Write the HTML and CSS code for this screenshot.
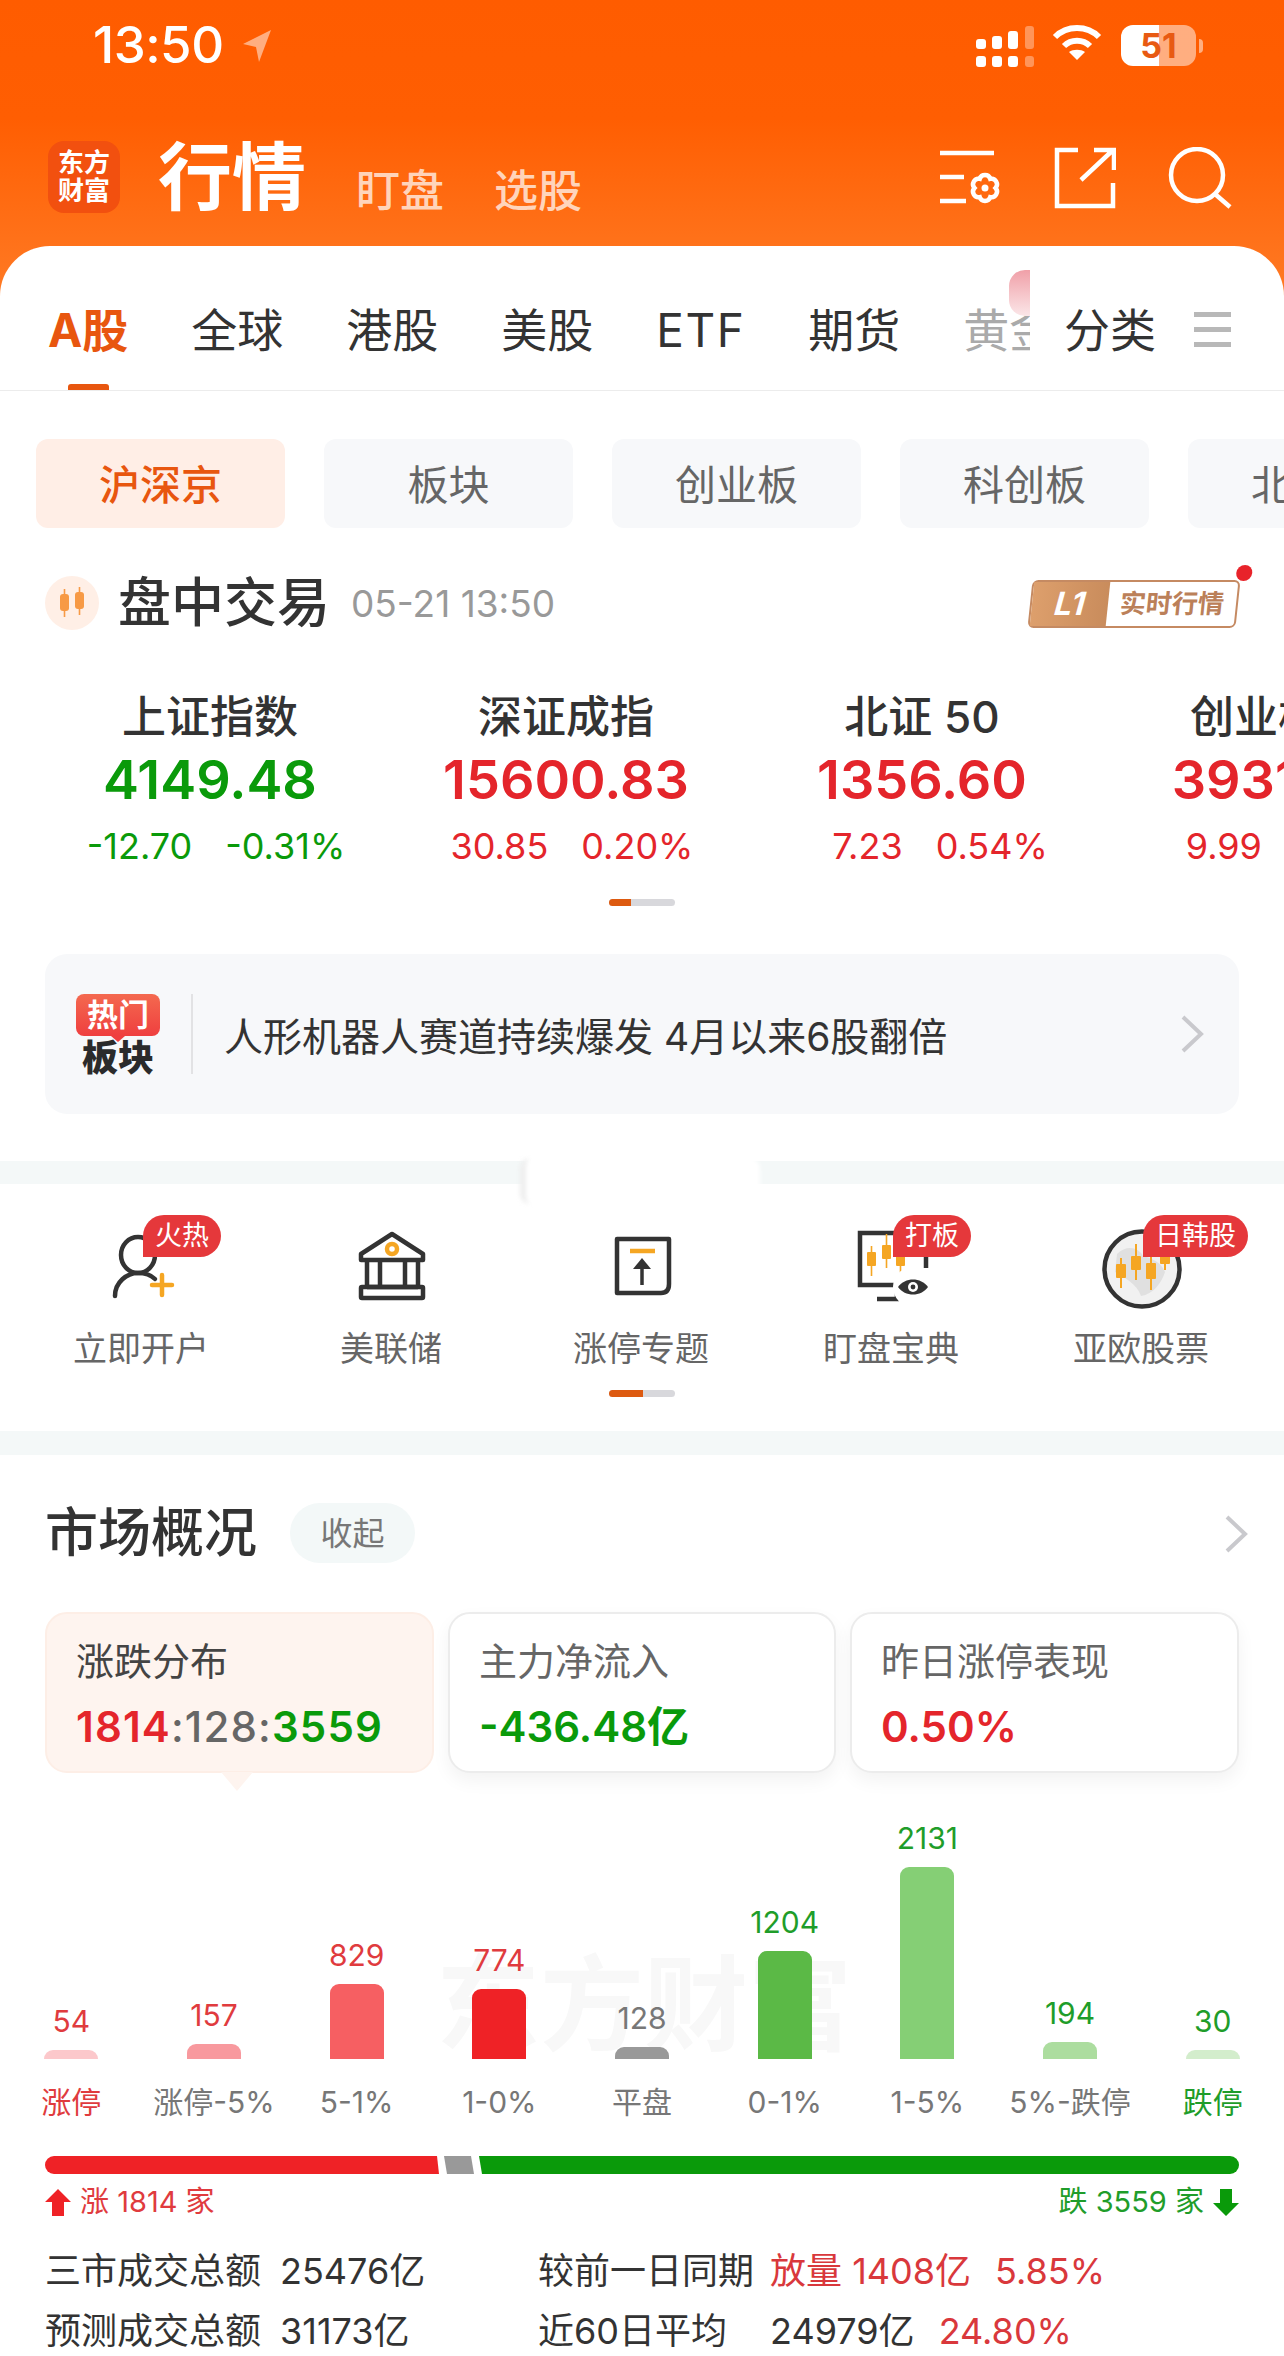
FILE: index.html
```html
<!DOCTYPE html>
<html lang="zh-CN">
<head>
    <meta charset="UTF-8">
    <meta name="viewport" content="width=device-width, initial-scale=1.0">
    <title>行情</title>
    <link rel="stylesheet" href="styles.css">
</head>
<body>
    <header class="top">
        <div class="status">
            <div class="status-left">
                <span class="time">13:50</span>
                <svg class="loc" width="30" height="34" viewBox="0 0 30 34"><path d="M29 1 L1 15 L14 18 L17 33 Z" fill="#fff" fill-opacity=".5"/></svg>
            </div>
            <div class="status-right">
                <svg width="60" height="44" viewBox="0 0 60 44" fill="#fff">
                    <rect x="0" y="15" width="10" height="10" rx="3"/><rect x="0" y="32" width="10" height="11" rx="3"/>
                    <rect x="16" y="12" width="10" height="13" rx="3"/><rect x="16" y="32" width="10" height="11" rx="3"/>
                    <rect x="32" y="7" width="10" height="18" rx="3"/><rect x="32" y="32" width="10" height="11" rx="3"/>
                    <rect x="49" y="2" width="9" height="23" rx="3" fill-opacity=".35"/><rect x="49" y="32" width="9" height="11" rx="3" fill-opacity=".35"/>
                </svg>
                <svg width="50" height="37" viewBox="0 0 50 37" fill="none" stroke="#fff" stroke-width="6">
                    <path d="M3 13 C15 1 35 1 47 13"/>
                    <path d="M12 22 C19 15 31 15 38 22"/>
                    <path d="M25 36 L17 28 C21 25 29 25 33 28 Z" fill="#fff" stroke="none"/>
                </svg>
                <div class="battery"><span class="battery-num">51</span></div>
                <span class="battery-nub"></span>
            </div>
        </div>
        <div class="head-row">
            <div class="logo"><span>东方</span><span>财富</span></div>
            <h1 class="page-title">行情</h1>
            <a class="head-link">盯盘</a>
            <a class="head-link">选股</a>
            <div class="head-icons">
                <svg class="icon-set" width="66" height="56" viewBox="0 0 66 56" fill="none" stroke="#fff" stroke-width="4.5">
                    <path d="M0 3 H54 M0 27 H24 M0 51 H26"/>
                    <path d="M55.5 38 A5.5 5.5 0 0 1 50.25 47.1 A5.5 5.5 0 0 1 39.75 47.1 A5.5 5.5 0 0 1 34.5 38 A5.5 5.5 0 0 1 39.75 28.9 A5.5 5.5 0 0 1 50.25 28.9 A5.5 5.5 0 0 1 55.5 38 Z"/>
                    <circle cx="45" cy="38" r="3.5" fill="#fff" stroke="none"/>
                </svg>
                <svg class="icon-share" width="62" height="62" viewBox="0 0 62 62" fill="none" stroke="#fff" stroke-width="4.5">
                    <path d="M24 3 H3 V59 H59 V36"/>
                    <path d="M27 33 L58 4 M40 3 H60 V23"/>
                </svg>
                <svg class="icon-search" width="64" height="62" viewBox="0 0 64 62" fill="none" stroke="#fff" stroke-width="4.5">
                    <circle cx="29" cy="28" r="26"/>
                    <path d="M47 47 L62 60"/>
                </svg>
            </div>
        </div>
    </header>

    <main class="panel">
        <nav class="tabs">
            <div class="tabs-scroll">
                <a class="tab tab-on">A股</a>
                <a class="tab">全球</a>
                <a class="tab">港股</a>
                <a class="tab">美股</a>
                <a class="tab tab-latin">ETF</a>
                <a class="tab">期货</a>
                <a class="tab tab-fade">黄金<span class="tab-dot"></span></a>
            </div>
            <a class="tab tab-more">分类</a>
            <span class="tab-menu"><i></i><i></i><i></i></span>
        </nav>

        <div class="chips">
            <a class="chip chip-on">沪深京</a>
            <a class="chip">板块</a>
            <a class="chip">创业板</a>
            <a class="chip">科创板</a>
            <a class="chip">北交所</a>
        </div>

        <section class="trade-head">
            <span class="candle-ico">
                <svg width="30" height="34" viewBox="0 0 30 34" fill="#f79a45">
                    <rect x="3" y="8" width="9" height="17" rx="3"/><rect x="6.7" y="3" width="1.6" height="28"/>
                    <rect x="18" y="6" width="9" height="17" rx="3"/><rect x="21.7" y="1" width="1.6" height="28"/>
                </svg>
            </span>
            <h2 class="trade-title">盘中交易</h2>
            <span class="trade-date">05-21 13:50</span>
            <div class="l1">
                <span class="l1-left"><b>L1</b></span>
                <span class="l1-right"><b>实时行情</b></span>
                <i class="l1-dot"></i>
            </div>
        </section>

        <div class="indices">
            <div class="index">
                <div class="index-name">上证指数</div>
                <div class="index-val down">4149.48</div>
                <div class="index-sub down"><span>-12.70</span><span>-0.31%</span></div>
            </div>
            <div class="index">
                <div class="index-name">深证成指</div>
                <div class="index-val up">15600.83</div>
                <div class="index-sub up"><span>30.85</span><span>0.20%</span></div>
            </div>
            <div class="index">
                <div class="index-name">北证 50</div>
                <div class="index-val up">1356.60</div>
                <div class="index-sub index-sub-shift up"><span>7.23</span><span>0.54%</span></div>
            </div>
            <div class="index">
                <div class="index-name">创业板指</div>
                <div class="index-val up">3931.20</div>
                <div class="index-sub index-sub-shift up"><span>9.99</span><span>0.25%</span></div>
            </div>
        </div>
        <div class="pager pager-a"><i></i></div>

        <a class="banner">
            <div class="hot">
                <span class="hot-top">热门</span>
                <span class="hot-bottom">板块</span>
            </div>
            <span class="banner-text">人形机器人赛道持续爆发 4月以来6股翻倍</span>
            <svg class="chev" width="24" height="38" viewBox="0 0 24 38" fill="none" stroke="#c9c9cd" stroke-width="4"><path d="M3 2 L21 19 L3 36"/></svg>
        </a>

        <div class="gap-bar"></div>
        <div class="smudge"></div>

        <section class="shortcuts">
            <div class="shortcut-row">
                <a class="shortcut">
                    <span class="sc-icon">
                        <svg width="100" height="80" viewBox="0 0 100 80" fill="none" stroke="#333" stroke-width="4.5" stroke-linecap="round">
                            <ellipse cx="47" cy="27" rx="17" ry="18"/>
                            <path d="M24 68 C24 54 36 45 47 45 C54 45 60 47 64 51"/>
                            <path d="M71 47 V67 M61 57 H81" stroke="#f5a623"/>
                        </svg>
                        <em class="badge">火热</em>
                    </span>
                    <span class="sc-label">立即开户</span>
                </a>
                <a class="shortcut">
                    <span class="sc-icon">
                        <svg width="100" height="80" viewBox="0 0 100 80" fill="none" stroke="#333" stroke-width="4.5" stroke-linejoin="round">
                            <path d="M51 6 L82 26 V32 H20 V26 Z"/>
                            <path d="M26 32 V59 M39 32 V59 M64 32 V59 M77 32 V59 M26 59 H77"/>
                            <rect x="20" y="59" width="62" height="11" rx="1"/>
                            <circle cx="51" cy="21" r="5" stroke="#f5a623"/>
                        </svg>
                    </span>
                    <span class="sc-label">美联储</span>
                </a>
                <a class="shortcut">
                    <span class="sc-icon">
                        <svg width="100" height="80" viewBox="0 0 100 80" fill="none" stroke="#333" stroke-width="4.5">
                            <path d="M26 11 H78 V56 C78 62 75 65 70 65 H26 Z" stroke-linejoin="round"/>
                            <path d="M39 23 H64" stroke="#f5a623"/>
                            <path d="M51 34 V57" stroke-width="3.5"/>
                            <path d="M51 30 L60 41 H42 Z" fill="#333" stroke="none"/>
                        </svg>
                    </span>
                    <span class="sc-label">涨停专题</span>
                </a>
                <a class="shortcut">
                    <span class="sc-icon">
                        <svg width="100" height="80" viewBox="0 0 100 80" fill="none">
                            <path d="M85 40 V5 H19 V57 H85" stroke="#333" stroke-width="4.5"/>
                            <path d="M36 71 H56 V60" stroke="#333" stroke-width="4.5"/>
                            <g fill="#f5a623">
                                <rect x="26" y="24" width="9" height="14" rx="1"/><rect x="29.7" y="18" width="1.6" height="30"/>
                                <rect x="41" y="17" width="9" height="14" rx="1"/><rect x="44.7" y="6" width="1.6" height="34"/>
                                <rect x="55" y="24" width="9" height="14" rx="1"/><rect x="58.7" y="16" width="1.6" height="32"/>
                            </g>
                            <circle cx="72" cy="59" r="20" fill="#fff"/>
                            <path d="M57 59 C64 49 80 49 87 59 C80 69 64 69 57 59 Z" fill="#333"/>
                            <circle cx="72" cy="59" r="5" fill="#fff"/>
                            <circle cx="72" cy="59" r="2.4" fill="#333"/>
                        </svg>
                        <em class="badge">打板</em>
                    </span>
                    <span class="sc-label">盯盘宝典</span>
                </a>
                <a class="shortcut">
                    <span class="sc-icon">
                        <svg width="100" height="84" viewBox="0 0 100 84" fill="none">
                            <circle cx="51" cy="41" r="37.5" fill="#f1f1f1" stroke="#333" stroke-width="4.5"/>
                            <path d="M26 26 C36 16 48 20 52 28 C60 30 70 34 74 44 C70 56 62 66 50 68 C46 56 34 50 24 44 Z" fill="#e0e0e0"/>
                            <g fill="#f5a623">
                                <rect x="25" y="36" width="10" height="14" rx="1"/><rect x="29" y="30" width="2" height="30"/>
                                <rect x="40" y="28" width="10" height="14" rx="1"/><rect x="44" y="16" width="2" height="36"/>
                                <rect x="55" y="35" width="10" height="16" rx="1"/><rect x="59" y="26" width="2" height="36"/>
                                <rect x="69" y="22" width="10" height="14" rx="1"/><rect x="73" y="12" width="2" height="30"/>
                            </g>
                        </svg>
                        <em class="badge">日韩股</em>
                    </span>
                    <span class="sc-label">亚欧股票</span>
                </a>
            </div>
            <div class="pager pager-b"><i></i></div>
        </section>

        <div class="gap-bar gap-bar-2"></div>

        <section class="market">
            <div class="market-head">
                <h2 class="market-title">市场概况</h2>
                <a class="collapse">收起</a>
                <svg class="chev-2" width="24" height="38" viewBox="0 0 24 38" fill="none" stroke="#c9c9cd" stroke-width="4"><path d="M3 2 L21 19 L3 36"/></svg>
            </div>

            <div class="cards">
                <div class="card card-on">
                    <div class="card-label">涨跌分布</div>
                    <div class="card-val"><span class="up">1814</span><span class="flat">:128:</span><span class="down">3559</span></div>
                </div>
                <div class="card">
                    <div class="card-label">主力净流入</div>
                    <div class="card-val down">-436.48亿</div>
                </div>
                <div class="card">
                    <div class="card-label">昨日涨停表现</div>
                    <div class="card-val up">0.50%</div>
                </div>
            </div>

            <div class="chart">
                <div class="watermark">东方财富</div>
                <div class="col"><span class="col-num c-up">54</span><i class="bar" style="height:9px;background:#fcc8cb"></i><span class="col-cat c-up">涨停</span></div>
                <div class="col"><span class="col-num c-up">157</span><i class="bar" style="height:15px;background:#f8999e"></i><span class="col-cat">涨停-5%</span></div>
                <div class="col"><span class="col-num c-up">829</span><i class="bar" style="height:75px;background:#f65f62"></i><span class="col-cat">5-1%</span></div>
                <div class="col"><span class="col-num c-up">774</span><i class="bar" style="height:70px;background:#ef2226"></i><span class="col-cat">1-0%</span></div>
                <div class="col"><span class="col-num c-flat">128</span><i class="bar" style="height:12px;background:#999"></i><span class="col-cat">平盘</span></div>
                <div class="col"><span class="col-num c-down">1204</span><i class="bar" style="height:108px;background:#5bb946"></i><span class="col-cat">0-1%</span></div>
                <div class="col"><span class="col-num c-down">2131</span><i class="bar" style="height:192px;background:#85cf75"></i><span class="col-cat">1-5%</span></div>
                <div class="col"><span class="col-num c-down">194</span><i class="bar" style="height:17px;background:#acdd9f"></i><span class="col-cat">5%-跌停</span></div>
                <div class="col"><span class="col-num c-down">30</span><i class="bar" style="height:9px;background:#d3edcc"></i><span class="col-cat c-down">跌停</span></div>
            </div>

            <div class="ratio">
                <i class="ratio-up"></i>
                <i class="ratio-flat"></i>
                <i class="ratio-down"></i>
            </div>
            <div class="ratio-legend">
                <span class="legend c-up">
                    <svg width="26" height="27" viewBox="0 0 26 27" fill="#ef2226"><path d="M13 0 L26 13 H19 V27 H7 V13 H0 Z"/></svg>
                    涨 1814 家
                </span>
                <span class="legend c-down">
                    跌 3559 家
                    <svg width="26" height="27" viewBox="0 0 26 27" fill="#0a9a0a"><path d="M13 27 L26 14 H19 V0 H7 V14 H0 Z"/></svg>
                </span>
            </div>

            <div class="stats">
                <div class="stat-row">
                    <span class="stat-a">三市成交总额</span><span class="stat-b">25476亿</span>
                    <span class="stat-c">较前一日同期</span><span class="stat-d"><b class="red">放量 1408亿</b><b class="red">5.85%</b></span>
                </div>
                <div class="stat-row">
                    <span class="stat-a">预测成交总额</span><span class="stat-b">31173亿</span>
                    <span class="stat-c">近60日平均</span><span class="stat-d"><b>24979亿</b><b class="red">24.80%</b></span>
                </div>
            </div>
        </section>
    </main>
</body>
</html>
```

FILE: styles.css
```css
* {
    box-sizing: border-box;
}
html, body {
    margin: 0;
    padding: 0;
}
body {
    width: 1284px;
    height: 2356px;
    overflow: hidden;
    background: #fff;
    color: #333;
    font-family: "Inter", "Noto Sans CJK SC", sans-serif;
}
h1, h2 {
    margin: 0;
}
.up { color: #e4252b; }
.down { color: #0a9a0a; }
.flat { color: #666; }

/* top orange header */
.top {
    height: 296px;
    background: linear-gradient(180deg, #ff5c00 0%, #ff5e02 40%, #ff7a24 100%);
}
.status {
    height: 90px;
    display: flex;
    justify-content: space-between;
    align-items: flex-start;
    padding: 20px 81px 0 93px;
    color: #fff;
}
.status-left {
    display: flex;
    align-items: center;
    gap: 18px;
}
.time {
    font-size: 51px;
    line-height: 50px;
    font-weight: 500;
    letter-spacing: -0.5px;
}
.loc {
    margin-top: 2px;
}
.status-right {
    display: flex;
    align-items: flex-start;
    gap: 19px;
    margin-top: 4px;
}
.status-right svg:first-child {
    margin-right: -3px;
}
.battery {
    width: 75px;
    height: 41px;
    border-radius: 12px;
    background: linear-gradient(90deg, #fff 0 51%, rgba(255, 255, 255, 0.5) 51% 100%);
    text-align: center;
    margin-top: 1px;
}
.battery-num {
    color: #e85a12;
    font-size: 34px;
    line-height: 41px;
    font-weight: 700;
}
.battery-nub {
    width: 4px;
    height: 14px;
    margin: 15px 0 0 -16px;
    border-radius: 0 4px 4px 0;
    background: rgba(255, 255, 255, 0.5);
}
.head-row {
    display: flex;
    align-items: flex-end;
    height: 90px;
    padding-left: 48px;
    position: relative;
    margin-top: 42px;
}
.logo {
    width: 72px;
    height: 72px;
    border-radius: 16px;
    background: #f2500f;
    color: #fff;
    font-size: 26px;
    line-height: 28px;
    font-weight: 700;
    display: flex;
    flex-direction: column;
    align-items: center;
    justify-content: center;
    margin-bottom: 9px;
}
.page-title {
    color: #fff;
    font-size: 74px;
    line-height: 90px;
    font-weight: 700;
    margin-left: 38px;
    margin-right: 50px;
}
.head-link {
    color: rgba(255, 255, 255, 0.72);
    font-size: 44px;
    line-height: 62px;
    font-weight: 500;
    margin-right: 50px;
}
.head-icons {
    margin-left: auto;
    display: flex;
    align-items: center;
    gap: 52px;
    padding-right: 52px;
    margin-bottom: 13px;
}
.icon-set {
    margin-right: -4px;
}

/* white panel */
.panel {
    margin-top: -50px;
    background: #fff;
    border-radius: 50px 50px 0 0;
    position: relative;
}
.tabs {
    height: 145px;
    border-bottom: 1px solid #ececec;
    padding-left: 48px;
    display: flex;
    align-items: flex-start;
    position: relative;
}
.tabs-scroll {
    width: 982px;
    display: flex;
    gap: 63px;
    overflow: hidden;
    padding-top: 34px;
    height: 144px;
}
.tab {
    position: relative;
    flex: none;
    font-size: 46px;
    line-height: 100px;
    color: #333;
    height: 110px;
}
.tab-latin {
    letter-spacing: 1.5px;
}
.tab-on {
    color: #e8560f;
    font-weight: 700;
}
.tab-on::after {
    content: "";
    position: absolute;
    left: 20px;
    bottom: 0;
    width: 41px;
    height: 6px;
    border-radius: 3px 3px 0 0;
    background: #e8560f;
}
.tab-fade {
    color: #aaa;
}
.tab-dot {
    position: absolute;
    left: 46px;
    top: -10px;
    width: 40px;
    height: 46px;
    border-radius: 16px;
    background: linear-gradient(180deg, #f0a0a8, #fbe6e8);
}
.tab-more {
    margin-left: 34px;
    margin-top: 34px;
}
.tab-menu {
    margin-left: 38px;
    margin-top: 66px;
    width: 37px;
    display: flex;
    flex-direction: column;
    gap: 10px;
}
.tab-menu i {
    height: 5px;
    background: #b8b8b8;
}

.chips {
    display: flex;
    gap: 39px;
    padding-left: 36px;
    margin-top: 48px;
    overflow: hidden;
}
.chip {
    flex: none;
    width: 249px;
    height: 89px;
    border-radius: 12px;
    background: #f7f8fa;
    color: #666;
    font-size: 41px;
    line-height: 93px;
    text-align: center;
}
.chip-on {
    background: #ffeee6;
    color: #e8560f;
    font-weight: 500;
}

.trade-head {
    display: flex;
    align-items: center;
    height: 54px;
    margin-top: 48px;
    padding-left: 45px;
    position: relative;
}
.candle-ico {
    width: 54px;
    height: 54px;
    border-radius: 50%;
    background: #ffefe6;
    display: flex;
    align-items: center;
    justify-content: center;
}
.trade-title {
    font-size: 53px;
    line-height: 54px;
    font-weight: 500;
    margin-left: 19px;
    color: #333;
}
.trade-date {
    font-size: 37px;
    color: #999;
    margin-left: 21px;
}
.l1 {
    position: absolute;
    left: 1030px;
    top: 4px;
    width: 208px;
    height: 48px;
    display: flex;
    transform: skewX(-6deg);
    border: 2px solid #c58a62;
    border-radius: 6px;
    background: #fff;
}
.l1-left {
    width: 76px;
    background: linear-gradient(90deg, #dd9f6c, #c98c5c);
    color: #fff;
    font-size: 32px;
    font-style: italic;
    line-height: 44px;
    text-align: center;
}
.l1-right {
    flex: 1;
    color: #bb8059;
    font-size: 26px;
    line-height: 44px;
    text-align: center;
    white-space: nowrap;
}
.l1-dot {
    position: absolute;
    right: -13px;
    top: -17px;
    width: 16px;
    height: 16px;
    border-radius: 50%;
    background: #e8232a;
}

.indices {
    display: flex;
    margin-top: 61px;
    padding-left: 32px;
    overflow: hidden;
}
.index {
    flex: none;
    width: 356px;
    text-align: center;
}
.index-name {
    font-size: 44px;
    line-height: 52px;
    font-weight: 500;
    color: #333;
}
.index-val {
    margin-top: 5px;
    font-size: 54px;
    line-height: 64px;
    font-weight: 600;
}
.index-sub {
    margin-top: 12px;
    display: flex;
    justify-content: center;
    gap: 33px;
    padding-left: 12px;
    font-size: 36px;
    line-height: 44px;
}
.index-sub-shift {
    padding-left: 36px;
}

.pager {
    width: 66px;
    height: 7px;
    margin: 31px auto 0;
    border-radius: 4px;
    background: #d8d8dc;
    overflow: hidden;
}
.pager i {
    display: block;
    width: 22px;
    height: 100%;
    background: #dd5a10;
}
.pager-b {
    margin-top: 19px;
}
.pager-b i {
    width: 34px;
}

.banner {
    margin: 48px 45px 0;
    height: 160px;
    border-radius: 22px;
    background: #f7f8fa;
    display: flex;
    align-items: center;
    position: relative;
}
.hot {
    width: 147px;
    height: 80px;
    padding-left: 31px;
    display: flex;
    flex-direction: column;
    align-items: flex-start;
    position: relative;
}
.hot::after {
    content: "";
    position: absolute;
    left: 146px;
    top: 0;
    height: 80px;
    width: 2px;
    background: #e2e2e4;
}
.hot-top {
    position: relative;
    width: 84px;
    height: 42px;
    border-radius: 8px;
    background: linear-gradient(180deg, #f4694f, #ef3f3f);
    color: #fff;
    font-size: 31px;
    line-height: 42px;
    font-weight: 700;
    text-align: center;
}
.hot-top::after {
    content: "";
    position: absolute;
    left: 35px;
    bottom: -6px;
    border-left: 7px solid transparent;
    border-right: 7px solid transparent;
    border-top: 6px solid #ef3f3f;
}
.hot-bottom {
    width: 84px;
    margin-top: 3px;
    font-size: 36px;
    line-height: 38px;
    font-weight: 900;
    color: #2b2b2b;
    text-align: center;
}
.banner-text {
    margin-left: 32px;
    font-size: 39px;
    color: #333;
    white-space: nowrap;
}
.chev {
    position: absolute;
    right: 35px;
    top: 61px;
}

.gap-bar {
    height: 23px;
    margin-top: 47px;
    background: #f4f8f8;
}
.gap-bar-2 {
    height: 24px;
    margin-top: 0;
}
.smudge {
    position: absolute;
    left: 520px;
    top: 912px;
    width: 240px;
    height: 46px;
    border-radius: 10px;
    background: #fff;
    border-left: 6px solid #eee;
    filter: blur(2px);
}

.shortcuts {
    height: 247px;
    padding-top: 44px;
}
.shortcut-row {
    display: flex;
    padding-left: 16px;
}
.shortcut {
    flex: none;
    width: 250px;
    display: flex;
    flex-direction: column;
    align-items: center;
}
.sc-icon {
    position: relative;
    display: block;
    width: 100px;
    height: 80px;
}
.badge {
    position: absolute;
    left: 52px;
    top: -13px;
    height: 42px;
    padding: 0 12px;
    border-radius: 21px 21px 21px 0;
    background: #e5383b;
    color: #fff;
    font-size: 27px;
    line-height: 42px;
    font-style: normal;
    white-space: nowrap;
}
.sc-label {
    margin-top: 19px;
    font-size: 34px;
    line-height: 44px;
    color: #666;
}

.market {
    padding-top: 48px;
}
.market-head {
    display: flex;
    align-items: center;
    height: 60px;
    padding-left: 45px;
    position: relative;
}
.market-title {
    font-size: 53px;
    line-height: 60px;
    font-weight: 500;
    color: #333;
}
.collapse {
    margin-left: 33px;
    width: 125px;
    height: 60px;
    border-radius: 30px;
    background: #f3f8f8;
    color: #777;
    font-size: 32px;
    line-height: 62px;
    text-align: center;
}
.chev-2 {
    position: absolute;
    right: 36px;
    top: 12px;
}

.cards {
    display: grid;
    grid-template-columns: 389px 388px 389px;
    gap: 14px;
    margin: 49px 45px 0;
}
.card {
    position: relative;
    height: 161px;
    border-radius: 22px;
    background: #fff;
    border: 2px solid #ececec;
    box-shadow: 0 8px 18px rgba(0, 0, 0, 0.05);
    padding: 22px 0 0 29px;
}
.card-on {
    background: #fef4ef;
    border-color: #fdeee6;
    box-shadow: none;
}
.card-on::after {
    content: "";
    position: absolute;
    left: 174px;
    bottom: -20px;
    width: 0;
    height: 0;
    border-left: 16px solid transparent;
    border-right: 16px solid transparent;
    border-top: 19px solid #fef4ef;
}
.card-label {
    font-size: 38px;
    line-height: 50px;
    color: #666;
}
.card-on .card-label {
    color: #444;
}
.card-val {
    margin-top: 16px;
    font-size: 42px;
    line-height: 50px;
    font-weight: 600;
    white-space: nowrap;
}
.card-on .card-val {
    letter-spacing: 1.15px;
}
.card-val .flat {
    font-weight: 500;
}

.chart {
    position: relative;
    height: 340px;
    margin-top: 9px;
    display: grid;
    grid-template-columns: repeat(9, 1fr);
    align-items: end;
}
.col {
    position: relative;
    display: flex;
    flex-direction: column;
    align-items: center;
}
.col-num {
    font-size: 30px;
    line-height: 36px;
    margin-bottom: 11px;
}
.bar {
    display: block;
    width: 54px;
    border-radius: 9px 9px 0 0;
}
.col-cat {
    margin-top: 23px;
    font-size: 30px;
    line-height: 40px;
    color: #777;
    white-space: nowrap;
}
.c-up { color: #e03b3e; }
.c-flat { color: #777; }
.c-down { color: #1f9d2a; }
.watermark {
    position: absolute;
    left: 436px;
    top: 168px;
    font-size: 104px;
    line-height: 110px;
    font-weight: 700;
    color: #f8f8f8;
    white-space: nowrap;
}

.ratio {
    display: flex;
    gap: 5px;
    height: 18px;
    margin: 34px 45px 0;
}
.ratio i {
    display: block;
    height: 100%;
}
.ratio-up {
    width: 394px;
    background: #ef2226;
    border-radius: 9px 0 0 9px;
    clip-path: polygon(0 0, 392px 0, 100% 100%, 0 100%);
}
.ratio-flat {
    width: 30px;
    background: #999;
    clip-path: polygon(0 0, 27px 0, 100% 100%, 3px 100%);
}
.ratio-down {
    flex: 1;
    background: #0a9a0a;
    border-radius: 0 9px 9px 0;
    clip-path: polygon(0 0, 100% 0, 100% 100%, 3px 100%);
}
.ratio-legend {
    display: flex;
    justify-content: space-between;
    margin: 10px 45px 0;
}
.legend {
    display: flex;
    align-items: center;
    gap: 9px;
    font-size: 29px;
    line-height: 36px;
}

.stats {
    margin: 21px 0 0 45px;
}
.stat-row {
    display: flex;
    height: 60px;
    align-items: baseline;
    font-size: 36px;
    line-height: 60px;
    color: #333;
    white-space: nowrap;
}
.stat-a {
    width: 235px;
}
.stat-b {
    width: 258px;
}
.stat-c {
    width: 232px;
}
.stat-d {
    display: flex;
    align-items: baseline;
    gap: 24px;
}
.stat-d b {
    font-weight: 400;
}
.stat-d .red {
    color: #d9383c;
}
```
